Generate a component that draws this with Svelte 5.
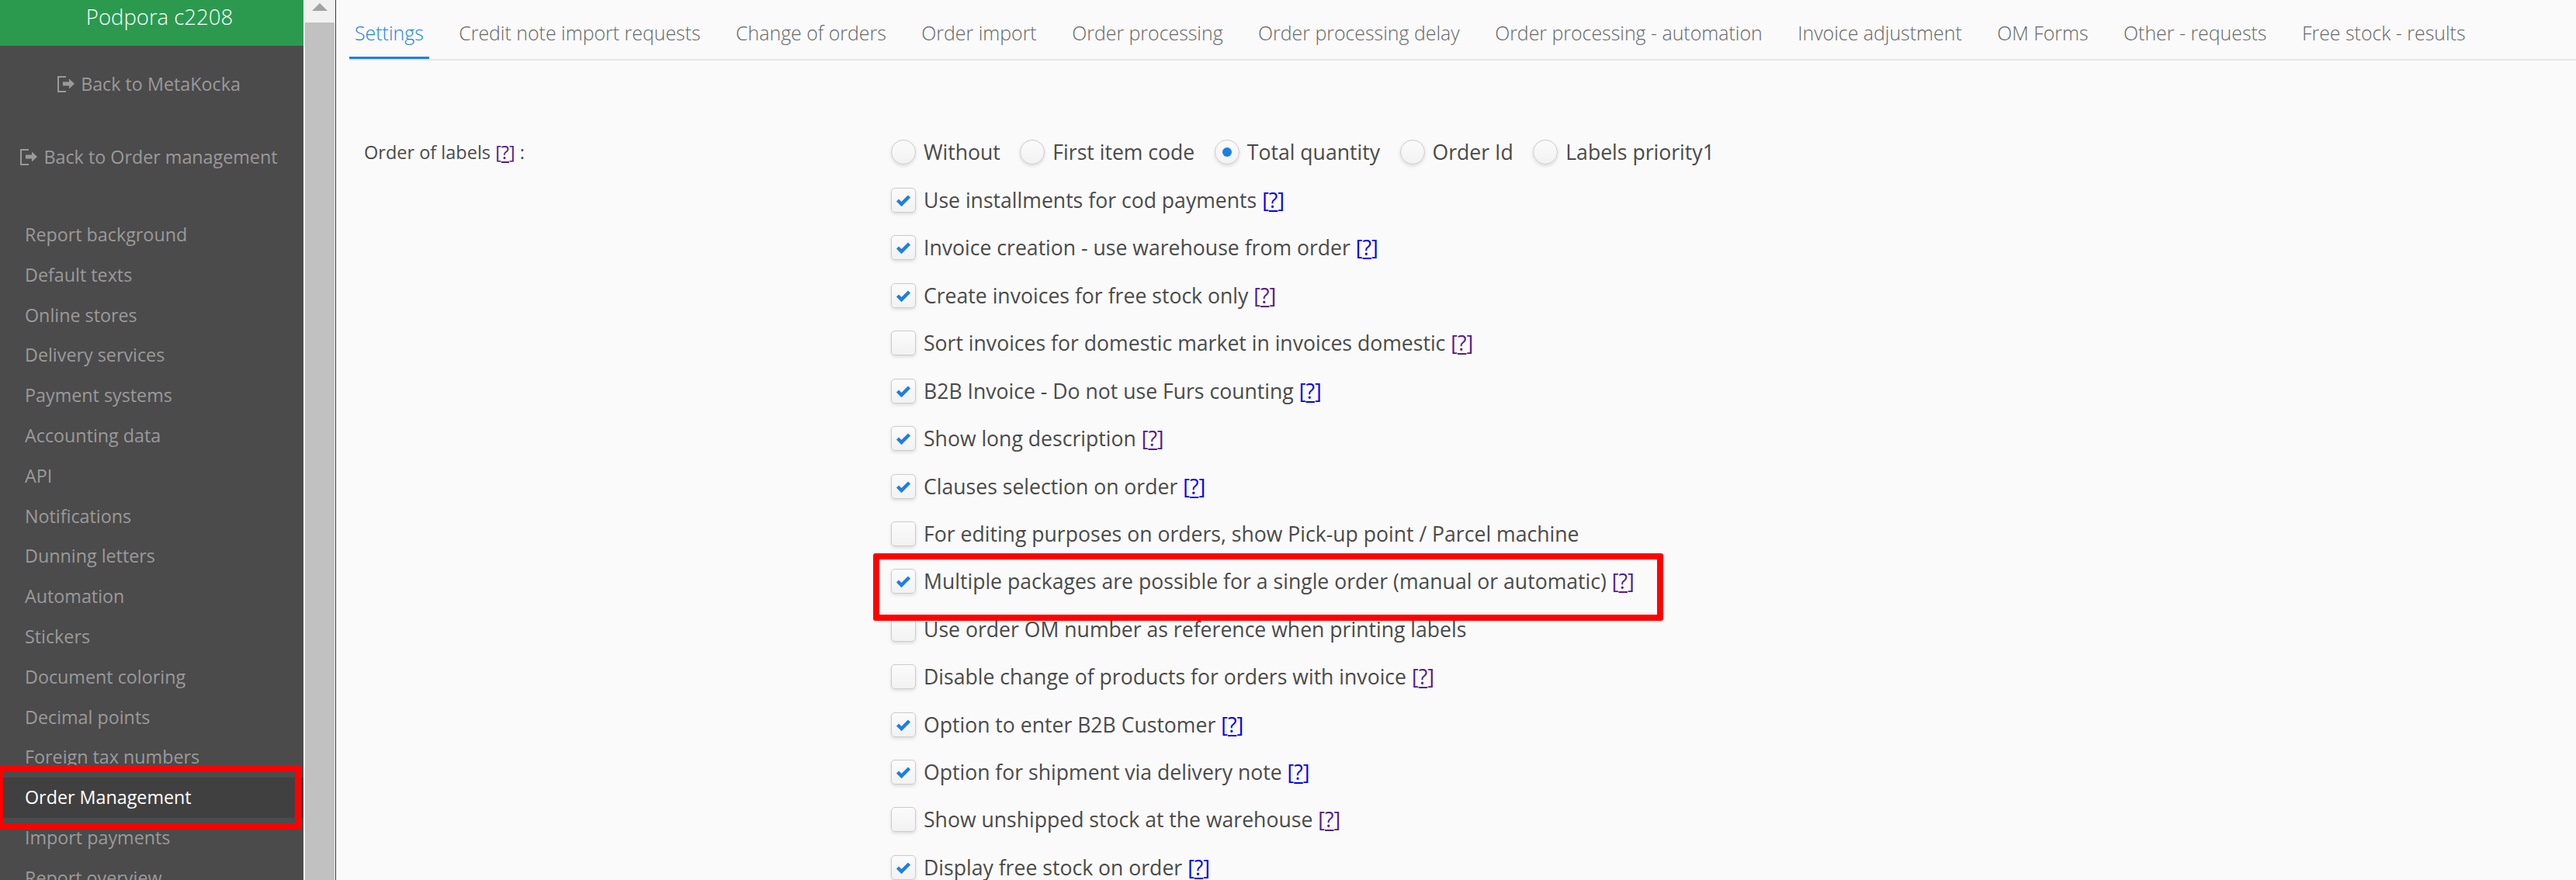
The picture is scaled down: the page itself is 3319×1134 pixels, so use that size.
<script>
  const menu = ['Report background', 'Default texts', 'Online stores', 'Delivery services', 'Payment systems', 'Accounting data', 'API', 'Notifications', 'Dunning letters', 'Automation', 'Stickers', 'Document coloring', 'Decimal points', 'Foreign tax numbers', 'Order Management', 'Import payments', 'Report overview']
  const tabs = ['Settings', 'Credit note import requests', 'Change of orders', 'Order import', 'Order processing', 'Order processing delay', 'Order processing - automation', 'Invoice adjustment', 'OM Forms', 'Other - requests', 'Free stock - results']
  const radios = ['Without', 'First item code', 'Total quantity', 'Order Id', 'Labels priority1']
  // help: '' none, 'new' blue link, 'seen' visited purple link
  const options = [
    { text: 'Use installments for cod payments', on: true, help: 'new' },
    { text: 'Invoice creation - use warehouse from order', on: true, help: 'new' },
    { text: 'Create invoices for free stock only', on: true, help: 'seen' },
    { text: 'Sort invoices for domestic market in invoices domestic', on: false, help: 'seen' },
    { text: 'B2B Invoice - Do not use Furs counting', on: true, help: 'new' },
    { text: 'Show long description', on: true, help: 'seen' },
    { text: 'Clauses selection on order', on: true, help: 'new' },
    { text: 'For editing purposes on orders, show Pick-up point / Parcel machine', on: false, help: '' },
    { text: 'Multiple packages are possible for a single order (manual or automatic)', on: true, help: 'seen' },
    { text: 'Use order OM number as reference when printing labels', on: false, help: '' },
    { text: 'Disable change of products for orders with invoice', on: false, help: 'seen' },
    { text: 'Option to enter B2B Customer', on: true, help: 'new' },
    { text: 'Option for shipment via delivery note', on: true, help: 'new' },
    { text: 'Show unshipped stock at the warehouse', on: false, help: 'seen' },
    { text: 'Display free stock on order', on: true, help: 'new' }
  ]
</script>

{#snippet exitIcon()}
  <svg class="exit" viewBox="0 0 24 21" width="24" height="21">
    <path d="M12 1H2v19h10" fill="none" stroke="currentColor" stroke-width="2"/>
    <path d="M8 7.500h8V3.500l7 6.500-7 6.500v-4H8z" fill="currentColor"/>
  </svg>
{/snippet}

<div class="page">
  <aside class="sidebar">
    <div class="brand">Podpora c2208</div>
    <a class="back first">{@render exitIcon()}Back to MetaKocka</a>
    <a class="back second">{@render exitIcon()}Back to Order management</a>
    <nav>
      {#each menu as item}
        <a class="item" class:active={item === 'Order Management'}>{item}</a>
      {/each}
    </nav>
  </aside>

  <div class="scrollbar">
    <div class="track"><span class="arrow"></span></div>
    <div class="thumb"></div>
  </div>

  <main>
    <div class="tabs">
      {#each tabs as tab, i}
        <a class="tab" class:current={i === 0}>{tab}</a>
      {/each}
    </div>

    <div class="form">
      <div class="label">Order of labels <span class="help seen">[<span class="q">?</span>]</span> :</div>
      <div class="controls">
        <div class="row radios">
          {#each radios as radio}
            <span class="radio-item">
              <span class="radio" class:picked={radio === 'Total quantity'}></span>{radio}
            </span>
          {/each}
        </div>
        {#each options as opt}
          <div class="row">
            <span class="box">
              {#if opt.on}
                <svg viewBox="0 0 20 16" width="20" height="16"><path d="M2.500 8l5 5L17.500 3" fill="none" stroke="#1b7fe6" stroke-width="4.500"/></svg>
              {/if}
            </span>
            <span>{opt.text}{#if opt.help}&nbsp;<span class="help {opt.help}">[<span class="q">?</span>]</span>{/if}</span>
          </div>
        {/each}
      </div>
    </div>
  </main>

  <div class="mark mark-menu"></div>
  <div class="mark mark-option"></div>
</div>

<style>
  :global(body) {
    margin: 0;
    background: #fafafa;
  }
  .page {
    position: relative;
    display: flex;
    height: 1134px;
    overflow: hidden;
    font-family: "Open Sans", "Liberation Sans", sans-serif;
    color: #4a4a4a;
  }
  .sidebar {
    width: 391px;
    flex: none;
    background: #4b4b4b;
    color: #9a9a9a;
    overflow: hidden;
    font-size: 23.300px;
  }
  .brand {
    height: 59px;
    padding-left: 20px;
    box-sizing: border-box;
    background: #2b9a4f;
    color: #fff;
    font-size: 27.500px;
    font-weight: 300;
    line-height: 44px;
    text-align: center;
  }
  .back {
    display: flex;
    align-items: center;
    justify-content: center;
    gap: 7px;
    height: 34px;
    padding-right: 8px;
  }
  .first { margin-top: 32px; }
  .second { margin-top: 60px; }
  .exit { flex: none; }
  nav {
    margin-top: 58px;
    display: flex;
    flex-direction: column;
  }
  .item {
    height: 51.800px;
    line-height: 51.800px;
    padding-left: 32px;
  }
  .active {
    background: #404040;
    color: #fff;
  }
  .scrollbar {
    width: 38px;
    margin: 0 1px 0 2px;
    flex: none;
    display: flex;
    flex-direction: column;
    background: #c1c1c1;
  }
  .track {
    height: 29px;
    background: #f1f1f1;
    display: flex;
    justify-content: center;
    padding-top: 4px;
    box-sizing: border-box;
  }
  .arrow {
    width: 0;
    height: 0;
    border-left: 10px solid transparent;
    border-right: 10px solid transparent;
    border-bottom: 10px solid #a3a3a3;
  }
  .thumb { flex: 1; }
  main {
    flex: 1;
    border-left: 1px solid #333;
    padding-left: 17px;
  }
  .tabs {
    display: flex;
    gap: 31.500px;
    height: 76px;
    border-bottom: 2px solid #e6e6e6;
  }
  .tab {
    padding: 23px 7px 0;
    height: 53px;
    font-size: 24.900px;
    font-weight: 300;
    line-height: 38px;
    color: #666;
  }
  .current {
    color: #1b7fe6;
    border-bottom: 3px solid #1b7fe6;
    height: 50px;
  }
  .form {
    display: flex;
    padding-top: 86.800px;
  }
  .label {
    width: 679px;
    padding-left: 19px;
    flex: none;
    font-size: 23.500px;
    line-height: 62px;
  }
  .controls {
    display: flex;
    flex-direction: column;
  }
  .row {
    display: flex;
    align-items: center;
    gap: 10px;
    height: 61.430px;
    font-size: 26.600px;
    white-space: nowrap;
  }
  .radios {
    gap: 25.500px;
    height: 62.500px;
  }
  .radio-item {
    display: flex;
    align-items: center;
    gap: 10px;
  }
  .box, .radio {
    width: 32px;
    height: 32px;
    box-sizing: border-box;
    border: 1px solid #cccccc;
    background: linear-gradient(#fbfbfb, #f2f2f2);
    box-shadow: 0 2px 4px rgba(0, 0, 0, 0.12);
    display: flex;
    align-items: center;
    justify-content: center;
    flex: none;
  }
  .box { border-radius: 5px; }
  .radio { border-radius: 50%; }
  .picked::after {
    content: '';
    width: 12px;
    height: 12px;
    border-radius: 50%;
    background: #1b7fe6;
  }
  .new { color: #0000ee; }
  .seen { color: #551a8b; }
  .q {
    text-decoration: underline solid 2px;
    text-underline-offset: 3px;
  }
  .mark {
    position: absolute;
    box-sizing: border-box;
    border: 8px solid #ff0000;
    border-radius: 3px;
  }
  .mark-menu {
    left: -4px;
    top: 986px;
    width: 392px;
    height: 83px;
  }
  .mark-option {
    left: 1125px;
    top: 713px;
    width: 1018px;
    height: 87px;
  }
</style>
